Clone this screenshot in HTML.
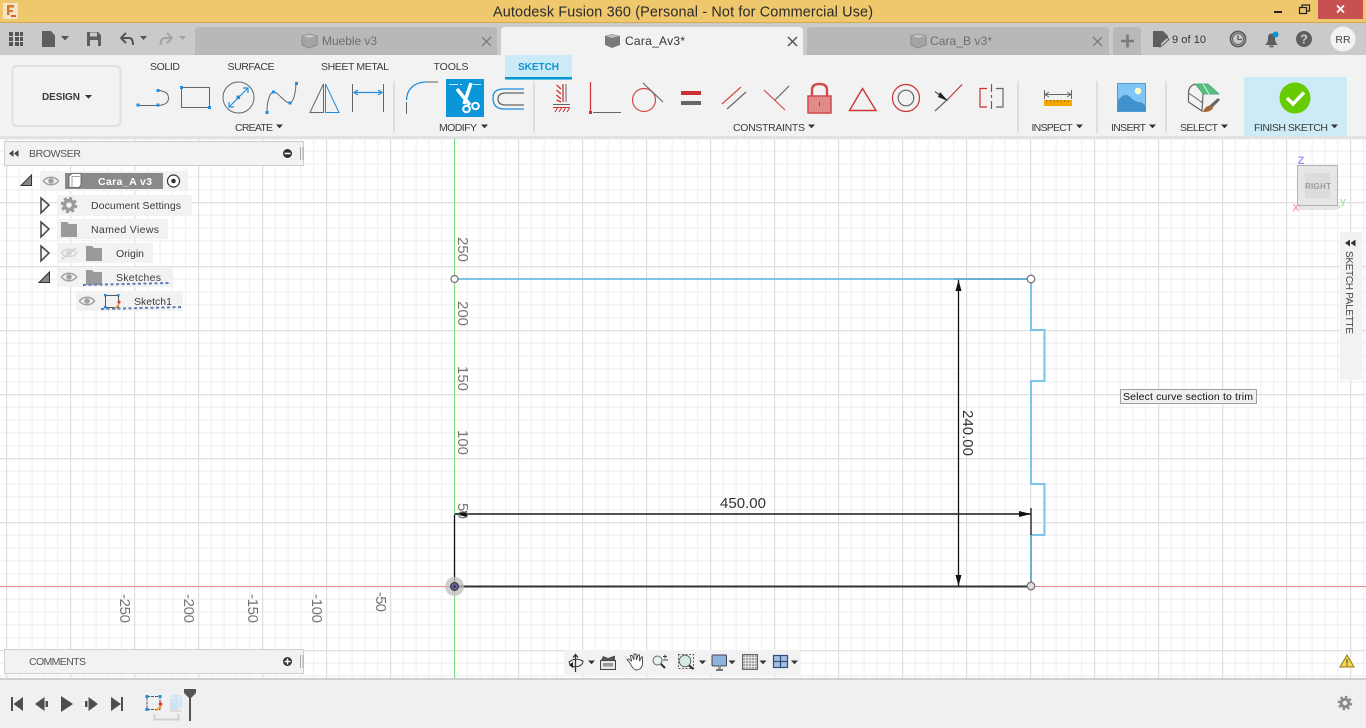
<!DOCTYPE html>
<html><head><meta charset="utf-8"><title>Autodesk Fusion 360</title>
<style>
html,body{margin:0;padding:0;width:1366px;height:728px;overflow:hidden;background:#fff}
svg{display:block}
text{font-family:"Liberation Sans",sans-serif;font-size:10.5px;fill:#3c3c3c}
.m{text-anchor:middle}
</style></head><body>
<svg width="1366" height="728" viewBox="0 0 1366 728" xmlns="http://www.w3.org/2000/svg">
<defs>
<pattern id="g" x="454" y="586" width="64" height="64" patternUnits="userSpaceOnUse">
<rect width="64" height="64" fill="#fff"/>
<path d="M13.3 0V64M26.1 0V64M38.9 0V64M51.7 0V64M0 13.3H64M0 26.1H64M0 38.9H64M0 51.7H64" stroke="#eeeeee" stroke-width="1" fill="none"/>
<path d="M.5 0V64M0 .5H64" stroke="#e0e0e0" stroke-width="1.5" fill="none"/>
</pattern>
<g id="eye"><path d="M-7.5 0C-4 -5 4 -5 7.500 0C4 5 -4 5 -7.500 0Z" fill="#f2f2f2" stroke="#a0a0a0" stroke-width="1.500"/><circle r="2.800" fill="#a0a0a0"/></g>
<path id="folder" d="M0 2H6L8 4H16V17H0Z" fill="#9a9a9a"/>
<path id="dd2" d="M0 0H8L4 4.500Z" fill="#555"/>
<path id="tri" d="M1 0L9 7L1 15Z" fill="#f4f4f4" stroke="#444" stroke-width="1.500" stroke-linejoin="miter"/>
<path id="tri2" d="M10.500 0V10.500H0Z" fill="#888" stroke="#333" stroke-width="1"/>
</defs>

<!-- title bar -->
<rect width="1366" height="23" fill="#efc76c"/>
<rect y="22" width="1366" height="1" fill="#d6a94f"/>
<rect x="3" y="3" width="15" height="16" fill="#f5e4c8"/>
<path d="M7 5H14V7.500H9.500V10H13V12H9.500V15H7Z" fill="#d8782a"/>
<rect x="11" y="15" width="5" height="2" fill="#e06020"/>
<text x="683" y="16.500" class="m" style="font-size:14.400px;fill:#2b2b2b" textLength="380">Autodesk Fusion 360 (Personal - Not for Commercial Use)</text>
<rect x="1274" y="11" width="8" height="2" fill="#222"/>
<rect x="1302" y="5" width="7.500" height="6" fill="#efc76c" stroke="#222" stroke-width="1.200"/>
<rect x="1299.500" y="7.500" width="7" height="6" fill="#efc76c" stroke="#222" stroke-width="1.200"/>
<rect x="1318" y="0" width="45" height="19" fill="#c75050"/>
<path d="M1337 5.500L1344 12.500M1344 5.500L1337 12.500" stroke="#fff" stroke-width="1.800"/>

<!-- tab bar -->
<rect y="23" width="1366" height="32" fill="#cacaca"/>
<path d="M9 32h4v4h-4zM15 32h4v4h-4zM20 32h3v4h-3zM9 37h4v4h-4zM15 37h4v4h-4zM20 37h3v4h-3zM9 42h4v4h-4zM15 42h4v4h-4zM20 42h3v4h-3z" fill="#555"/>
<path d="M42 31H51L55 35.500V47H42Z" fill="#5e5e5e"/>
<use href="#dd2" x="61" y="36"/>
<path d="M87 32H98L101 35V46H87Z" fill="#5e5e5e"/><rect x="90" y="32.500" width="7" height="4" fill="#cacaca"/><rect x="90" y="40" width="8" height="6" fill="#cacaca"/>
<path d="M126 33L121 38L126 43M121.500 38H129Q133 38 133 45" fill="none" stroke="#555" stroke-width="2"/>
<path d="M140 36h7l-3.500 4z" fill="#555"/>
<path d="M167 33L172 38L167 43M171.500 38H165Q160.500 38 160.500 45" fill="none" stroke="#a3a3a3" stroke-width="2"/>
<path d="M179 36h7l-3.500 4z" fill="#a3a3a3"/>

<path d="M195 55V31Q195 27 199 27H493Q497 27 497 31V55Z" fill="#b8b8b8"/>
<path d="M501 55V31Q501 27 505 27H799Q803 27 803 31V55Z" fill="#f2f2f2"/>
<path d="M807 55V31Q807 27 811 27H1105Q1109 27 1109 31V55Z" fill="#b8b8b8"/>
<path d="M1113 55V31Q1113 27 1117 27H1137Q1141 27 1141 31V55Z" fill="#b8b8b8"/>
<path d="M1121 41H1134M1127.500 34.500V47.500" stroke="#7a7a7a" stroke-width="2.600"/>

<path d="M302 36L309 34L317 36V45L309 48L302 45Z" fill="#a3a3a3" stroke="#8c8c8c"/><path d="M303 36L309 38L316 36L309 34.500Z" fill="#c6c6c6"/>
<text x="322" y="45" style="font-size:12px;fill:#6e6e6e" textLength="55">Mueble v3</text>
<path d="M482 37L491 46M491 37L482 46" stroke="#808080" stroke-width="1.500"/>

<path d="M605 36L612 34L620 36V45L612 48L605 45Z" fill="#7a7a7a"/><path d="M606 36L612 38L619 36L612 34.500Z" fill="#bdbdbd"/>
<text x="625" y="45" style="font-size:12px;fill:#333" textLength="60">Cara_Av3*</text>
<path d="M788 37L797 46M797 37L788 46" stroke="#555" stroke-width="1.500"/>

<path d="M911 36L918 34L926 36V45L918 48L911 45Z" fill="#a3a3a3" stroke="#8c8c8c"/><path d="M912 36L918 38L925 36L918 34.500Z" fill="#c6c6c6"/>
<text x="930" y="45" style="font-size:12px;fill:#6e6e6e" textLength="62">Cara_B v3*</text>
<path d="M1093 37L1102 46M1102 37L1093 46" stroke="#808080" stroke-width="1.500"/>

<path d="M1153 31H1163L1168 36V40L1160 47H1153Z" fill="#5e5e5e"/>
<path d="M1160 47L1161 43L1167 37.500L1169 39.500L1163 45Z" fill="#cacaca" stroke="#5e5e5e"/>
<text x="1172" y="43" style="font-size:11px;fill:#333" textLength="34">9 of 10</text>
<circle cx="1238" cy="39" r="7.500" fill="none" stroke="#5e5e5e" stroke-width="1.800"/><circle cx="1238" cy="39" r="5.500" fill="#cacaca" stroke="#5e5e5e"/>
<path d="M1238 35V39.500H1242" fill="none" stroke="#5e5e5e" stroke-width="1.300"/>
<path d="M1265 45Q1268 43 1268 38Q1268 33.500 1271.500 33.500Q1275 33.500 1275 38Q1275 43 1278 45Z" fill="#5e5e5e"/><rect x="1269.500" y="45.500" width="4" height="1.800" fill="#5e5e5e"/>
<circle cx="1275.500" cy="34.500" r="3" fill="#0696d7"/>
<circle cx="1304" cy="39" r="8" fill="#5e5e5e"/>
<text x="1304" y="43.500" class="m" style="font-size:13px;font-weight:bold;fill:#cacaca">?</text>
<circle cx="1343" cy="39" r="12.500" fill="#f2f2f2"/>
<text x="1343" y="43" class="m" style="font-size:10.500px;fill:#444">RR</text>

<!-- canvas -->
<rect x="0" y="137" width="1366" height="542" fill="url(#g)"/>
<!-- ribbon -->
<rect y="55" width="1366" height="81" fill="#f2f2f2"/>
<rect y="136" width="1366" height="2" fill="#e2e2e2"/>
<rect x="12.500" y="66" width="108" height="60" rx="4" fill="#f2f2f2" stroke="#e0e0e0" stroke-width="2"/>
<text x="61" y="100" class="m" style="font-weight:bold;font-size:10px" textLength="38">DESIGN</text>
<path d="M85 95h7l-3.500 3.800z" fill="#333"/>
<text x="165" y="70" class="m" textLength="30">SOLID</text>
<text x="251" y="70" class="m" textLength="47">SURFACE</text>
<text x="355" y="70" class="m" textLength="68">SHEET METAL</text>
<text x="451" y="70" class="m" textLength="35">TOOLS</text>
<rect x="505" y="55" width="67" height="25" fill="#cdeaf7"/><rect x="505" y="77" width="67" height="2.500" fill="#0696d7"/>
<text x="538.500" y="70" class="m" style="fill:#0696d7;font-weight:bold;font-size:10px" textLength="41">SKETCH</text>

<!-- create -->
<path d="M139 105.500H158" stroke="#666" fill="none"/>
<path d="M158 90.500Q168.500 91 168.500 98Q168.500 105 158 105.500" fill="none" stroke="#666"/>
<path d="M136.500 103.500h3v3h-3zM156.500 103.500h3v3h-3zM156.500 89h3v3h-3z" fill="#1e8fe0"/>
<rect x="181.500" y="87.500" width="28" height="20" fill="none" stroke="#666"/>
<path d="M180 86h3v3h-3zM208 106h3v3h-3z" fill="#1e8fe0"/>
<circle cx="238.500" cy="97.500" r="15.500" fill="none" stroke="#666"/>
<path d="M229 107L248 88M229 102V107H234M243 88H248V93" fill="none" stroke="#1e8fe0" stroke-width="1.200"/>
<rect x="236.500" y="95.500" width="3.500" height="3.500" fill="#1e8fe0"/>
<path d="M267 112.500C267 100 270 93 273 92C279 92 284 103 290 103C294 102 296 90 296 83" fill="none" stroke="#666"/>
<path d="M265.500 111h3v3h-3zM272 90.500h3v3h-3zM288.500 101.500h3v3h-3zM295 82h3v3h-3z" fill="#1e8fe0"/>
<path d="M310 112.500L323.500 84V112.500Z" fill="none" stroke="#666"/>
<path d="M325.500 84L339 112.500H325.500Z" fill="none" stroke="#1e8fe0"/>
<path d="M352.500 84V112M383.500 84V112" stroke="#666"/>
<path d="M354 92.500H382M358 90L354 92.500L358 95M378 90L382 92.500L378 95" fill="none" stroke="#1e8fe0" stroke-width="1.200"/>
<text x="254" y="131" class="m" textLength="38" style="font-size:10.500px">CREATE</text>
<path d="M276 124.500h7l-3.500 3.800z" fill="#333"/>
<rect x="393" y="81" width="2" height="52" fill="#dedede"/>
<!-- modify -->
<path d="M406.500 100C406.500 90 414 82 426 82" fill="none" stroke="#1e8fe0" stroke-width="1.300"/>
<path d="M426 82H438M406.500 102V114" stroke="#666"/>
<rect x="446" y="79" width="38" height="38" fill="#0a96d8"/>
<path d="M449 84.500H458M460 84.500H462M473 84.500H481" stroke="#cdeaf7" stroke-width="1"/>
<path d="M457 89L470 105M471 83L464 104" stroke="#fff" stroke-width="3.500" fill="none"/>
<circle cx="466.500" cy="109" r="3.300" fill="none" stroke="#fff" stroke-width="2"/>
<circle cx="475.500" cy="106" r="3.300" fill="none" stroke="#fff" stroke-width="2"/>
<path d="M524 89H504Q493 89 493 97.500Q493 109 504 109H524" fill="none" stroke="#1e8fe0" stroke-width="1.300"/>
<path d="M524 93H506Q498 93 498 99Q498 105 506 105H524" fill="none" stroke="#666" stroke-width="1.300"/>
<text x="458" y="131" class="m" textLength="38" style="font-size:10.500px">MODIFY</text>
<path d="M481 124.500h7l-3.500 3.800z" fill="#333"/>
<rect x="533" y="81" width="2" height="52" fill="#dedede"/>
<!-- constraints -->
<path d="M563 84V102M556.500 85L561 89M556.500 90L561 94M556.500 95L561 99M556.500 100L561 102" stroke="#c33" fill="none" stroke-width="1.300"/>
<path d="M566 84V102" stroke="#666"/>
<path d="M553 104.500H570" stroke="#666"/><path d="M553 107.500H570" stroke="#c33"/>
<path d="M555 112L557.500 108M559 112L561.500 108M563 112L565.500 108M567 112L569.500 108" stroke="#c33"/>
<path d="M590.500 82V111" stroke="#c33" stroke-width="1.200"/><rect x="589" y="111" width="3" height="3" fill="#c33"/>
<path d="M593 112.500H621" stroke="#666"/>
<circle cx="644" cy="100" r="11.500" fill="none" stroke="#d24a4a" stroke-width="1.200"/>
<path d="M643 83L663 102" stroke="#666" stroke-width="1.200"/>
<rect x="681" y="91" width="20" height="4" fill="#c83232"/><rect x="681" y="101" width="20" height="4" fill="#666"/>
<path d="M722 104L741 87" stroke="#d24a4a" stroke-width="1.200"/><path d="M727 109L746 92" stroke="#666" stroke-width="1.200"/>
<path d="M764 90L785 110" stroke="#d24a4a" stroke-width="1.200"/><path d="M775 100L789 86" stroke="#666" stroke-width="1.200"/>
<path d="M812 97V90Q812 84 819.500 84Q827 84 827 90V97" fill="none" stroke="#d24a4a" stroke-width="2.400"/>
<rect x="808" y="96" width="23" height="17" fill="#e08a8a" stroke="#d24a4a" stroke-width="1.500"/>
<rect x="819" y="102" width="1" height="4" fill="#b33"/>
<path d="M849.500 110.500L862.500 88.500L876 110.500Z" fill="none" stroke="#c33" stroke-width="1.400"/>
<circle cx="906" cy="98" r="13.500" fill="none" stroke="#c33" stroke-width="1.200"/>
<circle cx="906" cy="98" r="7.800" fill="none" stroke="#666" stroke-width="1.200"/>
<path d="M935 111L949 98" stroke="#666" stroke-width="1.200"/><path d="M949 98L962 84.500" stroke="#c33" stroke-width="1.200"/>
<path d="M935 91.500L946 100" stroke="#333"/><path d="M940 92L948 101L938 97Z" fill="#222"/>
<path d="M987 88.500H980V107H987" fill="none" stroke="#c33" stroke-width="1.200"/>
<path d="M996 88.500H1003V107H996" fill="none" stroke="#666" stroke-width="1.200"/>
<path d="M991.500 84V112" stroke="#c33" stroke-dasharray="8 3 3 3" stroke-width="1.200"/>
<text x="769" y="131" class="m" textLength="72" style="font-size:10.500px">CONSTRAINTS</text>
<path d="M808 124.500h7l-3.500 3.800z" fill="#333"/>
<rect x="1017" y="81" width="2" height="52" fill="#dedede"/>
<!-- inspect -->
<path d="M1044.500 90V99M1071.500 90V99" stroke="#666"/>
<path d="M1045 94.500H1071M1049 92L1045 94.500L1049 97M1067 92L1071 94.500L1067 97" fill="none" stroke="#666"/>
<rect x="1044" y="100" width="28" height="6" fill="#f5a800"/>
<path d="M1047 100v2M1050.500 100v2M1054 100v2M1057.500 100v2M1061 100v2M1064.500 100v2M1068 100v2" stroke="#a56f00"/>
<text x="1052" y="131" class="m" textLength="41" style="font-size:10.500px">INSPECT</text>
<path d="M1076 124.500h7l-3.500 3.800z" fill="#333"/>
<rect x="1096" y="81" width="2" height="52" fill="#dedede"/>
<!-- insert -->
<rect x="1117" y="83" width="29" height="29" fill="#7fc6f7"/>
<path d="M1117 102Q1124 91 1130 97Q1135 102 1139 102Q1143 102 1146 107V112H1117Z" fill="#3f92cc"/>
<circle cx="1138" cy="91" r="3.300" fill="#fdfbc8"/>
<rect x="1117.500" y="83.500" width="28" height="28" fill="none" stroke="#4d9bd3"/>
<text x="1128.500" y="131" class="m" textLength="35" style="font-size:10.500px">INSERT</text>
<path d="M1149 124.500h7l-3.500 3.800z" fill="#333"/>
<rect x="1165" y="81" width="2" height="52" fill="#dedede"/>
<!-- select -->
<path d="M1195 84H1208L1219 94H1203Q1198 87 1195 84Z" fill="#55c07f" stroke="#3f9f66" stroke-width=".7"/>
<path d="M1203 84L1209 94" stroke="#e8f7ee"/>
<path d="M1195 84Q1189 86 1188.500 92V102L1202 111L1203 94" fill="none" stroke="#666" stroke-width="1.200"/>
<path d="M1188.500 93L1203 103" stroke="#666"/>
<path d="M1209 106L1218 98L1220 100L1212 108Z" fill="#666"/>
<path d="M1203 112Q1205 106 1211 105L1213 108Q1211 112 1203 112Z" fill="#a0662d"/>
<text x="1199" y="131" class="m" textLength="38" style="font-size:10.500px">SELECT</text>
<path d="M1221 124.500h7l-3.500 3.800z" fill="#333"/>
<!-- finish -->
<rect x="1244" y="77" width="103" height="59" fill="#cdeaf7"/>
<circle cx="1295" cy="98" r="15.500" fill="#66cc00"/>
<path d="M1287 98L1293 104L1304 92.500" fill="none" stroke="#fff" stroke-width="3.400"/>
<text x="1291" y="131" class="m" textLength="74" style="font-size:10.500px">FINISH SKETCH</text>
<path d="M1331 124.500h7l-3.500 3.800z" fill="#333"/>

<!-- axes -->
<path d="M454.500 138V679" stroke="#7fdc7f" stroke-width="1"/>
<path d="M0 586.500H1366" stroke="#e98b8b" stroke-width="1"/>
<!-- sketch geometry -->
<path d="M454.500 279H1031V330H1044.500V381H1031V484H1044.500V535H1031V586" fill="none" stroke="#7cc5e8" stroke-width="2"/>
<path d="M954 279H1031" stroke="#6aafcf" stroke-width="2"/>
<path d="M1031 535V586" stroke="#6aafcf" stroke-width="2"/>
<path d="M454.500 515V586.500" stroke="#111" stroke-width="1.300"/>
<path d="M454.500 586.500H1031" stroke="#333" stroke-width="2"/>
<path d="M454.500 514H1031" stroke="#3a3a3a" stroke-width="1.800"/>
<path d="M1031 508V535" stroke="#333" stroke-width="1.500"/>
<path d="M958.500 280V586" stroke="#111" stroke-width="1.300"/>
<path d="M958.500 280L955.500 291H961.500Z" fill="#111"/>
<path d="M958.500 586L955.500 575H961.500Z" fill="#111"/>
<path d="M1031 514L1019 511V517Z" fill="#111"/>
<path d="M455 514L467 511V517Z" fill="#111"/>
<circle cx="454.500" cy="279" r="3.500" fill="#fff" stroke="#777" stroke-width="1.300"/>
<circle cx="1031" cy="279" r="3.800" fill="#fff" stroke="#777" stroke-width="1.300"/>
<circle cx="1031" cy="586" r="3.800" fill="#ddd" stroke="#777" stroke-width="1.300"/>
<circle cx="454.500" cy="586.500" r="9.500" fill="#bdbdbd" opacity=".75"/>
<circle cx="454.500" cy="586.500" r="4" fill="#6a5a9e" stroke="#333"/>
<circle cx="454.500" cy="586.500" r="1" fill="#111"/>
<text x="743" y="508" class="m" style="font-size:15px;fill:#333" textLength="46">450.00</text>
<text transform="translate(963,410) rotate(90)" style="font-size:15px;fill:#333" textLength="46">240.00</text>
<text transform="translate(458,237) rotate(90)" style="font-size:15px;fill:#777" textLength="25">250</text>
<text transform="translate(458,301) rotate(90)" style="font-size:15px;fill:#777" textLength="25">200</text>
<text transform="translate(458,366) rotate(90)" style="font-size:15px;fill:#777" textLength="25">150</text>
<text transform="translate(458,430) rotate(90)" style="font-size:15px;fill:#777" textLength="25">100</text>
<text transform="translate(458,503) rotate(90)" style="font-size:15px;fill:#777" textLength="16">50</text>
<text transform="translate(120,594) rotate(90)" style="font-size:15px;fill:#777" textLength="29">-250</text>
<text transform="translate(184,594) rotate(90)" style="font-size:15px;fill:#777" textLength="29">-200</text>
<text transform="translate(248,594) rotate(90)" style="font-size:15px;fill:#777" textLength="29">-150</text>
<text transform="translate(312,594) rotate(90)" style="font-size:15px;fill:#777" textLength="29">-100</text>
<text transform="translate(376,592) rotate(90)" style="font-size:15px;fill:#777" textLength="20">-50</text>

<!-- browser -->
<rect x="4.500" y="141.500" width="299" height="24" fill="#f2f2f2" stroke="#cfcfcf"/>
<path d="M9 153.500L13.500 150V157ZM14 153.500L18.500 150V157Z" fill="#444"/>
<text x="29" y="157" textLength="52" style="font-size:10.500px;fill:#555">BROWSER</text>
<circle cx="287.500" cy="153.500" r="4.500" fill="#2e2e2e"/><rect x="284.500" y="152.700" width="6" height="1.600" fill="#fff"/>
<path d="M300.500 147V160M303 147V160" stroke="#aaa"/>

<g fill="#f2f2f2">
<rect x="40" y="171" width="148" height="20"/>
<rect x="57" y="195" width="135" height="20"/>
<rect x="57" y="219" width="111" height="20"/>
<rect x="57" y="243" width="96" height="20"/>
<rect x="57" y="267" width="116" height="20"/>
<rect x="76" y="291" width="107" height="20"/>
</g>
<use href="#tri2" x="21" y="175"/>
<use href="#eye" x="51" y="181"/>
<rect x="65" y="173" width="98" height="16" fill="#8a8a8a"/>
<path d="M69 176L72 173.500H81V185L79 187.500H69Z" fill="#fff" stroke="#555" stroke-width=".8"/><path d="M72 176.500H80M72 176.500V187" stroke="#888" stroke-width=".8"/>
<text x="125" y="185" class="m" style="font-weight:bold;fill:#fff;font-size:10.500px" textLength="54">Cara_A v3</text>
<circle cx="173.500" cy="181" r="6" fill="#fff" stroke="#333" stroke-width="1.200"/><circle cx="173.500" cy="181" r="2.300" fill="#333"/>

<use href="#tri" x="40" y="198"/>
<circle cx="69" cy="205" r="4.500" fill="none" stroke="#9a9a9a" stroke-width="3.500"/>
<circle cx="69" cy="205" r="7" fill="none" stroke="#9a9a9a" stroke-width="2.500" stroke-dasharray="3 2.500"/>
<text x="91" y="209" textLength="90" style="font-size:10.500px">Document Settings</text>
<use href="#tri" x="40" y="222"/>
<use href="#folder" x="61" y="220"/>
<text x="91" y="233" textLength="68" style="font-size:10.500px">Named Views</text>
<use href="#tri" x="40" y="246"/>
<g opacity=".35"><use href="#eye" x="69" y="253"/><path d="M62 259L76 248" stroke="#999" stroke-width="1.500"/></g>
<use href="#folder" x="86" y="244"/>
<text x="116" y="257" textLength="28" style="font-size:10.500px">Origin</text>
<use href="#tri2" x="39" y="272"/>
<use href="#eye" x="69" y="277"/>
<use href="#folder" x="86" y="268"/>
<text x="116" y="281" textLength="45" style="font-size:10.500px">Sketches</text>
<path d="M83 285L171 283" stroke="#5e7eb4" stroke-width="2" stroke-dasharray="3 2.500"/>
<use href="#eye" x="87" y="301"/>
<rect x="105.500" y="295.500" width="13" height="12" fill="none" stroke="#555"/>
<path d="M104 294h2.500v2.500h-2.500zM117 294h2.500v2.500h-2.500zM104 306h2.500v2.500h-2.500z" fill="#1e8fe0"/>
<path d="M113 309L119 303L120 304L115 310Z" fill="#f2a93b"/><circle cx="119" cy="302" r="1.500" fill="#e33"/>
<text x="134" y="305" textLength="38" style="font-size:10.500px">Sketch1</text>
<path d="M101 309L183 307" stroke="#5e7eb4" stroke-width="2" stroke-dasharray="3 2.500"/>

<!-- comments -->
<rect x="4.500" y="649.500" width="299" height="24" fill="#f2f2f2" stroke="#cfcfcf"/>
<text x="29" y="665" textLength="57" style="font-size:10.500px;fill:#555">COMMENTS</text>
<circle cx="287.500" cy="661.500" r="4.500" fill="#2e2e2e"/><path d="M284.500 661.500H290.500M287.500 658.500V664.500" stroke="#fff" stroke-width="1.500"/>
<path d="M300.500 655V668M303 655V668" stroke="#aaa"/>

<!-- nav bar -->
<rect x="564" y="650" width="236" height="25" fill="#f2f2f2"/>
<path d="M575.500 655V672M573 657.500L575.500 654.500L578 657.500" fill="none" stroke="#333" stroke-width="1.300"/>
<path d="M569 662Q575 657 583 661Q583 666 575 667Q570 666 569 662Z" fill="none" stroke="#333"/>
<path d="M569 665L573 662V668Z" fill="#222"/>
<path d="M588 660.500h7l-3.500 3.800z" fill="#333"/>
<rect x="600.500" y="660.500" width="15" height="9" fill="#e6e6e6" stroke="#444"/>
<rect x="603" y="663" width="10" height="3.500" fill="#999"/>
<path d="M601 660L603 656L608 658L615 655.500V660Z" fill="#555"/>
<path d="M630 663L627 659.500L628.500 659L631.500 661L630.500 655.500H632L634 660L634 654H636L636.500 660L638 655H639.500V661L641.500 657H642.500V664Q642 669 637 670Q633 670 630 663Z" fill="#fff" stroke="#444" stroke-width=".9"/>
<circle cx="657.500" cy="660.500" r="4.500" fill="#e4f0f0" stroke="#666"/><path d="M661 664L665 668" stroke="#333" stroke-width="2"/>
<path d="M663 656.500H667M665 654.500V658.500M663 660H668" stroke="#444"/>
<rect x="678.500" y="654.500" width="15" height="14" fill="none" stroke="#666" stroke-dasharray="2 1.500"/>
<circle cx="685" cy="661" r="5.800" fill="#d5ebe8" stroke="#666"/><path d="M689 665.500L693.500 669" stroke="#333" stroke-width="2.200"/>
<path d="M699 660.500h7l-3.500 3.800z" fill="#333"/>
<rect x="712" y="655" width="14.500" height="11" rx="1" fill="#8fb2dc" stroke="#445"/><path d="M716 669H723V671H716Z" fill="#777"/><path d="M718 666H721V669H718Z" fill="#999"/>
<path d="M728.500 660.500h7l-3.500 3.800z" fill="#333"/>
<rect x="742.500" y="654.500" width="15" height="15" fill="#a8a8a8" stroke="#666"/>
<path d="M745.500 655V669M748.500 655V669M751.500 655V669M754.500 655V669M743 657.500H757M743 660.500H757M743 663.500H757M743 666.500H757" stroke="#eee" stroke-width=".7"/>
<path d="M759.500 660.500h7l-3.500 3.800z" fill="#333"/>
<rect x="773.500" y="655.500" width="14" height="12" fill="#a5bede" stroke="#2f4f80" stroke-width="1.200"/>
<path d="M780.500 655.500V667.500M773.500 661.500H787.500" stroke="#2f4f80" stroke-width="1.200"/>
<path d="M791 660.500h7l-3.500 3.800z" fill="#333"/>

<!-- warning -->
<path d="M1347 655L1354 667H1340Z" fill="#f5d54a" stroke="#8c7a1d"/>
<path d="M1347 659V663.500M1347 664.500V666" stroke="#333"/>

<!-- view cube -->
<path d="M1297 205H1345L1336 210H1300Z" fill="#d6d6d6" opacity=".6"/>
<rect x="1297.500" y="165.500" width="40" height="40" fill="#e6e6e6" stroke="#b4b4b4"/>
<rect x="1305" y="173" width="25" height="25" fill="#dcdcdc"/>
<text x="1318" y="189" class="m" style="font-weight:bold;fill:#9c9c9c;font-size:8px" textLength="26">RIGHT</text>
<text x="1301" y="164" class="m" style="fill:#9a9af0;font-weight:bold;font-size:11px">Z</text>
<text x="1343" y="206" class="m" style="fill:#a0eca0;font-weight:bold;font-size:10px">Y</text>
<text x="1296" y="211" class="m" style="fill:#f5a0a0;font-weight:bold;font-size:10px">X</text>

<!-- palette -->
<rect x="1340" y="232" width="22" height="148" fill="#f2f2f2"/>
<path d="M1345 243L1350 239.500V246.500ZM1350.500 243L1355.500 239.500V246.500Z" fill="#333"/>
<text transform="translate(1346,251) rotate(90)" textLength="83" style="font-size:10px;fill:#444">SKETCH PALETTE</text>

<!-- tooltip -->
<rect x="1120.500" y="389.500" width="136" height="14" fill="#f0f0f0" stroke="#a0a0a0"/>
<text x="1123" y="400" textLength="130" style="font-size:10.500px;fill:#111">Select curve section to trim</text>

<!-- timeline -->
<rect y="679" width="1366" height="49" fill="#f0f0f0"/>
<rect y="678" width="1366" height="2" fill="#cfcfcf"/>
<path d="M11 697H13V711H11ZM13.500 704L23 697V711Z" fill="#4e4e4e"/>
<path d="M35 704L44.500 697V711ZM45.500 701H48V707H45.500Z" fill="#4e4e4e"/>
<path d="M61 696L73 704L61 712Z" fill="#4e4e4e"/>
<path d="M85 701H87.500V707H85ZM88.500 697L98 704L88.500 711Z" fill="#4e4e4e"/>
<path d="M111 697L121 704L111 711ZM121 697H123V711H121Z" fill="#4e4e4e"/>
<rect x="147" y="696.500" width="13" height="13" fill="none" stroke="#555" stroke-dasharray="3 1"/>
<path d="M145.500 695h3v3h-3zM158.500 695h3v3h-3zM145.500 708h3v3h-3z" fill="#1e8fe0"/>
<path d="M155 711L160 705L162 707L157 711Z" fill="#f2a93b"/><circle cx="160.500" cy="704" r="1.800" fill="#e33"/>
<path d="M170 698L173 695H182V707L179 710H170Z" fill="#cfe3f2"/><path d="M170 698H179V710M179 698L182 695" stroke="#e8f2f8" fill="none"/>
<rect x="170" y="710" width="12" height="2" fill="#dcdcdc"/>
<path d="M154.500 714V719.500H178.500V714" fill="none" stroke="#cfcfcf" stroke-width="2"/>
<path d="M184 689H196V693L191 698V721H189V698L184 693Z" fill="#555"/>
<circle cx="1345" cy="703" r="3.800" fill="none" stroke="#8a8a8a" stroke-width="3"/>
<circle cx="1345" cy="703" r="6.300" fill="none" stroke="#8a8a8a" stroke-width="2" stroke-dasharray="2.500 2.400"/>
</svg>
</body></html>
